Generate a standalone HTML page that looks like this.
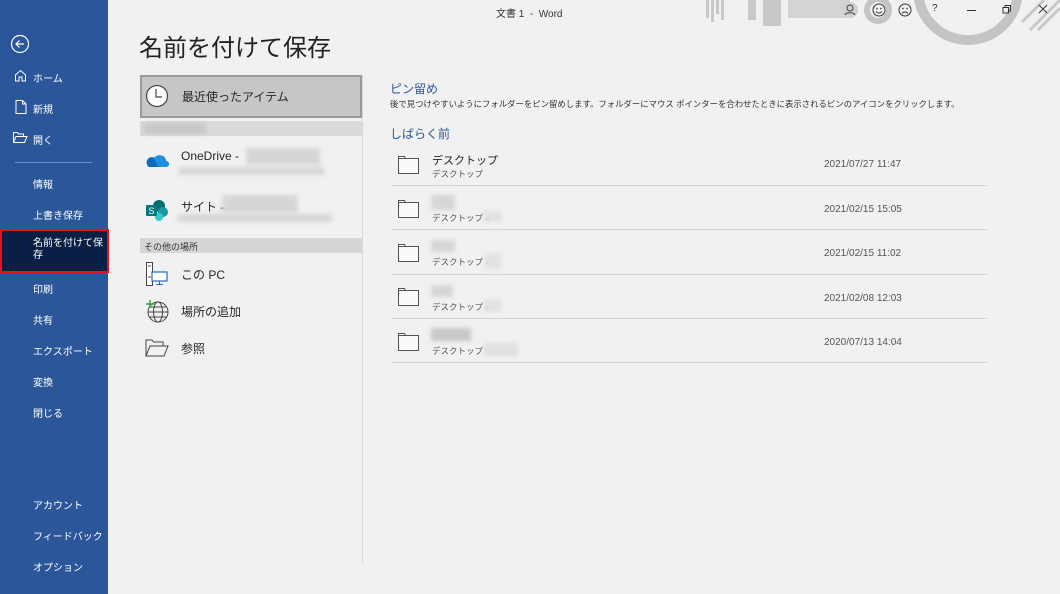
<!DOCTYPE html>
<html><head><meta charset="utf-8"><style>
*{margin:0;padding:0;box-sizing:border-box}
body{width:1060px;height:594px;overflow:hidden;background:#f1f1f1;font-family:"Liberation Sans","Noto Sans CJK JP",sans-serif;position:relative;color:#262626}
.a{position:absolute;white-space:nowrap}
#side{position:absolute;left:0;top:0;width:108px;height:594px;background:#2b579a;color:#fff}
#side .a{font-size:10px;color:#fff}
.blur{position:absolute;background:#d6d6d6;filter:blur(2px)}
.sep{position:absolute;left:392px;width:595px;height:1px;background:#d4d4d4}
.date{position:absolute;left:824px;font-size:10px;color:#555}
.fn{position:absolute;left:432px;font-size:11px;color:#222}
.fs{position:absolute;left:432px;font-size:8.5px;color:#555}
</style></head><body>
<div id="side">
<svg class="a" style="left:10px;top:34px" width="20" height="20" viewBox="0 0 20 20"><circle cx="10" cy="10" r="8.5" fill="none" stroke="#fff" stroke-width="1.2"/><path d="M14 10H6M9.5 6.5L6 10l3.5 3.5" fill="none" stroke="#fff" stroke-width="1.2"/></svg>
<svg class="a" style="left:14px;top:69px" width="13" height="13" viewBox="0 0 13 13"><path d="M1.5 12V6L6.5 1.5 11.5 6V12H8V8H5V12Z" fill="none" stroke="#fff"/></svg>
<div class="a" style="left:33px;top:70px">ホーム</div>
<svg class="a" style="left:15px;top:100px" width="12" height="14" viewBox="0 0 12 14"><path d="M1 .5h6.5L11 4v9.5H1Z M7.5 .5V4H11" fill="none" stroke="#fff"/></svg>
<div class="a" style="left:33px;top:101px">新規</div>
<svg class="a" style="left:13px;top:132px" width="15" height="11" viewBox="0 0 15 11"><path d="M.5 10.5V.5h4l1 1.5h5v2M.5 10.5l2.5-6h11l-2.5 6Z" fill="none" stroke="#fff"/></svg>
<div class="a" style="left:33px;top:132px">開く</div>
<div class="a" style="left:15px;top:162px;width:77px;height:1px;background:#6f8fc0"></div>
<div class="a" style="left:33px;top:176px">情報</div>
<div class="a" style="left:33px;top:207px">上書き保存</div>
<div class="a" style="left:0;top:229px;width:109px;height:44px;background:#0a1f44;border:2px solid #e8101c"></div>
<div class="a" style="left:33px;top:238px;line-height:12px">名前を付けて保<br>存</div>
<div class="a" style="left:33px;top:281px">印刷</div>
<div class="a" style="left:33px;top:312px">共有</div>
<div class="a" style="left:33px;top:343px">エクスポート</div>
<div class="a" style="left:33px;top:374px">変換</div>
<div class="a" style="left:33px;top:405px">閉じる</div>
<div class="a" style="left:33px;top:497px">アカウント</div>
<div class="a" style="left:33px;top:528px">フィードバック</div>
<div class="a" style="left:33px;top:559px">オプション</div>
</div>

<svg class="a" style="left:700px;top:0" width="360" height="50" viewBox="0 0 360 50">
<g fill="#c8c8c8"><rect x="6" y="0" width="3" height="18"/><rect x="11" y="0" width="3" height="22"/><rect x="16" y="0" width="3" height="14"/><rect x="21" y="0" width="3" height="20"/>
<rect x="48" y="0" width="8" height="20"/><rect x="63" y="0" width="18" height="26"/><rect x="88" y="0" width="62" height="18" opacity=".7"/></g>
<circle cx="178" cy="10" r="14" fill="#c4c4c4"/><circle cx="178" cy="10" r="8" fill="#f1f1f1"/>
<circle cx="268" cy="-10" r="50" fill="none" stroke="#c4c4c4" stroke-width="10"/>
<g stroke="#c8c8c8" stroke-width="3"><path d="M330 30L360 0M338 30L360 8M322 22L344 0"/></g>
</svg>
<div class="a" style="left:496px;top:5px;font-size:10px;color:#333">文書 1 &nbsp;-&nbsp; Word</div>
<svg class="a" style="left:842px;top:2px" width="16" height="16" viewBox="0 0 16 16"><circle cx="8" cy="8" r="8" fill="#d0d0d0"/><circle cx="8" cy="6" r="3" fill="none" stroke="#444"/><path d="M3 13c1-3 9-3 10 0" fill="none" stroke="#444"/></svg>
<svg class="a" style="left:872px;top:3px" width="14" height="14" viewBox="0 0 14 14"><circle cx="7" cy="7" r="6" fill="none" stroke="#333"/><circle cx="5" cy="5.5" r=".8" fill="#333"/><circle cx="9" cy="5.5" r=".8" fill="#333"/><path d="M4 8.5c1.5 2 4.5 2 6 0" fill="none" stroke="#333"/></svg>
<svg class="a" style="left:898px;top:3px" width="14" height="14" viewBox="0 0 14 14"><circle cx="7" cy="7" r="6" fill="none" stroke="#333"/><circle cx="5" cy="5.5" r=".8" fill="#333"/><circle cx="9" cy="5.5" r=".8" fill="#333"/><path d="M4 10.5c1.5-2 4.5-2 6 0" fill="none" stroke="#333"/></svg>
<div class="a" style="left:932px;top:3px;font-size:10px;color:#333">?</div>
<div class="a" style="left:967px;top:10px;width:9px;height:1px;background:#333"></div>
<svg class="a" style="left:1002px;top:4px" width="10" height="10" viewBox="0 0 10 10"><path d="M1 3.5h5.5V9H1Z M3 3.5V1.5h5.5V7H6.5" fill="none" stroke="#333"/></svg>
<svg class="a" style="left:1038px;top:4px" width="10" height="10" viewBox="0 0 10 10"><path d="M1 1l8 8M9 1L1 9" stroke="#333"/></svg>

<div class="a" style="left:139px;top:28px;font-size:24px;color:#222">名前を付けて保存</div>

<div class="a" style="left:140px;top:75px;width:222px;height:43px;background:#c6c6c6;border:2px solid #9a9a9a"></div>
<svg class="a" style="left:145px;top:84px" width="24" height="24" viewBox="0 0 24 24"><circle cx="12" cy="12" r="10.5" fill="#fff" stroke="#444" stroke-width="1.2"/><path d="M11 5v8h6" fill="none" stroke="#444" stroke-width="1.2"/></svg>
<div class="a" style="left:182px;top:88px;font-size:12px">最近使ったアイテム</div>
<div class="a" style="left:140px;top:121px;width:222px;height:15px;background:#dadada"></div>
<div class="blur" style="left:144px;top:123px;width:62px;height:11px;background:#c8c8c8"></div>
<svg class="a" style="left:145px;top:152px" width="24" height="16" viewBox="0 0 24 16"><path d="M4 15h17a3 3 0 000-6 6 6 0 00-11-3A5 5 0 004 15z" fill="#0f6cbd"/><path d="M9 6a6 6 0 0111 3 3 3 0 011 6H13z" fill="#1e90e0"/></svg>
<div class="a" style="left:181px;top:149px;font-size:12px">OneDrive -</div>
<div class="blur" style="left:246px;top:148px;width:74px;height:17px"></div>
<div class="blur" style="left:179px;top:167px;width:145px;height:8px"></div>
<svg class="a" style="left:145px;top:199px" width="24" height="22" viewBox="0 0 24 22"><circle cx="14" cy="7" r="6" fill="#036c70"/><circle cx="18" cy="13" r="5" fill="#1a9ba1"/><circle cx="14" cy="18" r="4" fill="#37c6d0"/><rect x="1" y="6" width="11" height="11" rx="1" fill="#03787c"/><text x="3.5" y="15" font-size="9" fill="#fff" font-family="Liberation Sans">S</text></svg>
<div class="a" style="left:181px;top:198px;font-size:12px">サイト –</div>
<div class="blur" style="left:222px;top:195px;width:76px;height:18px"></div>
<div class="blur" style="left:178px;top:214px;width:154px;height:8px"></div>
<div class="a" style="left:140px;top:238px;width:222px;height:15px;background:#d6d6d6"></div>
<div class="a" style="left:144px;top:240px;font-size:9px;color:#333">その他の場所</div>
<svg class="a" style="left:145px;top:261px" width="24" height="26" viewBox="0 0 24 26"><path d="M1.5 1.5h6v23h-6z" fill="#fff" stroke="#444"/><path d="M3 5h3M3 16h3" stroke="#444"/><rect x="7" y="11" width="15" height="9" fill="#fff" stroke="#1f6fc0" stroke-width="1.2"/><path d="M14.5 20v3M11 23.5h7" stroke="#1f6fc0"/></svg>
<div class="a" style="left:181px;top:266px;font-size:12px">この PC</div>
<svg class="a" style="left:144px;top:299px" width="26" height="24" viewBox="0 0 26 24"><circle cx="14" cy="13" r="10" fill="none" stroke="#444"/><ellipse cx="14" cy="13" rx="4.5" ry="10" fill="none" stroke="#444"/><path d="M4 13h20M6 8h16M6 18h16" stroke="#444"/><path d="M6 1v8M2 5h8" stroke="#2e9d4a" stroke-width="1.4"/></svg>
<div class="a" style="left:181px;top:303px;font-size:12px">場所の追加</div>
<svg class="a" style="left:145px;top:339px" width="24" height="18" viewBox="0 0 24 18"><path d="M1 17V1h6l1.5 2H18v4M1 17l4-10h18l-4 10Z" fill="none" stroke="#444"/></svg>
<div class="a" style="left:181px;top:340px;font-size:12px">参照</div>
<div class="a" style="left:362px;top:75px;width:1px;height:488px;background:#d8d8d8"></div>

<div class="a" style="left:390px;top:80px;font-size:12px;color:#2b579a">ピン留め</div>
<div class="a" style="left:390px;top:98px;font-size:8.4px;color:#333">後で見つけやすいようにフォルダーをピン留めします。フォルダーにマウス ポインターを合わせたときに表示されるピンのアイコンをクリックします。</div>
<div class="a" style="left:390px;top:125px;font-size:12px;color:#2b579a">しばらく前</div>

<svg width="0" height="0" style="position:absolute"><defs><g id="fd"><path d="M.5 2.5V.5h6l1 2h13v15H.5Z M.5 2.5h7" fill="#fafafa" stroke="#555"/></g></defs></svg>
<svg class="a" style="left:398px;top:156px" width="22" height="19"><use href="#fd"/></svg>
<div class="fn" style="top:152px">デスクトップ</div><div class="fs" style="top:168px">デスクトップ</div>
<div class="date" style="top:159px">2021/07/27 11:47</div>
<div class="sep" style="top:185px"></div>

<svg class="a" style="left:398px;top:200px" width="22" height="19"><use href="#fd"/></svg>
<div class="blur" style="left:431px;top:195px;width:24px;height:15px"></div>
<div class="fs" style="top:212px">デスクトップ »</div><div class="blur" style="left:484px;top:211px;width:18px;height:11px;background:#e2e2e2"></div>
<div class="date" style="top:204px">2021/02/15 15:05</div>
<div class="sep" style="top:229px"></div>

<svg class="a" style="left:398px;top:244px" width="22" height="19"><use href="#fd"/></svg>
<div class="blur" style="left:431px;top:240px;width:24px;height:12px"></div>
<div class="fs" style="top:256px">デスクトップ »</div><div class="blur" style="left:485px;top:253px;width:16px;height:16px;background:#e2e2e2"></div>
<div class="date" style="top:248px">2021/02/15 11:02</div>
<div class="sep" style="top:274px"></div>

<svg class="a" style="left:398px;top:288px" width="22" height="19"><use href="#fd"/></svg>
<div class="blur" style="left:431px;top:285px;width:22px;height:12px"></div>
<div class="fs" style="top:301px">デスクトップ »</div><div class="blur" style="left:484px;top:299px;width:18px;height:13px;background:#e2e2e2"></div>
<div class="date" style="top:293px">2021/02/08 12:03</div>
<div class="sep" style="top:318px"></div>

<svg class="a" style="left:398px;top:333px" width="22" height="19"><use href="#fd"/></svg>
<div class="blur" style="left:431px;top:328px;width:40px;height:13px;background:#c8c8c8"></div>
<div class="fs" style="top:345px">デスクトップ »</div><div class="blur" style="left:484px;top:343px;width:34px;height:13px;background:#e0e0e0"></div>
<div class="date" style="top:337px">2020/07/13 14:04</div>
<div class="sep" style="top:362px"></div>
</body></html>
